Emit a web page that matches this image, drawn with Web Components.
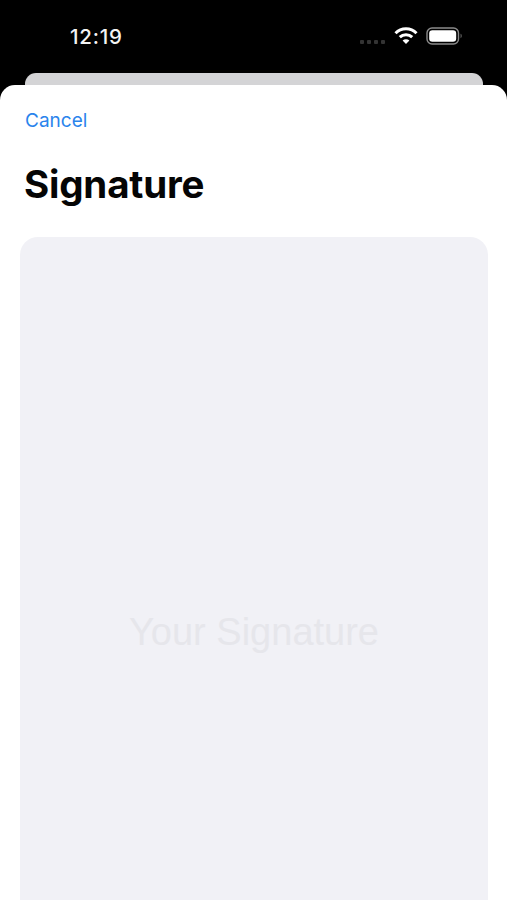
<!DOCTYPE html>
<html>
<head>
<meta charset="utf-8">
<style>
	html, body { margin: 0; height: 900px; overflow: hidden; background: #000; font-family: Inter, "Liberation Sans", sans-serif; }
</style>
</head>
<body>
<status-bar></status-bar>
<sheet-view>
	<signature-pad></signature-pad>
</sheet-view>
<script>
class StatusBar extends HTMLElement {
	constructor() {
		super();
		this.attachShadow({ mode: "open" });
		this.shadowRoot.innerHTML = `
			<style>
				:host { display: flex; align-items: center; justify-content: space-between; height: 73px; box-sizing: border-box; padding: 0 44px 0 70px; color: #f4f4f4; }
				.time { font-size: 20.5px; font-weight: 500; letter-spacing: 0.8px; }
				.icons { display: flex; align-items: center; margin-top: 1px; }
				.dots { display: flex; gap: 2.4px; margin-right: 9px; margin-top: 10px; }
				.dots i { width: 4.5px; height: 4px; background: #333; border-radius: 1px; }
				svg { display: block; }
			</style>
			<span class="time">12:19</span>
			<div class="icons">
				<div class="dots"><i></i><i></i><i></i><i></i></div>
				<svg width="24" height="19" viewBox="0 0 24 19" style="margin-right:8px;margin-top:-3px">
					<path d="M1.5 7.2C7.2 1.4 16.8 1.4 22.5 7.2" fill="none" stroke="#fff" stroke-width="3"/>
					<path d="M5.8 11.2C9.2 7.9 14.8 7.9 18.2 11.2" fill="none" stroke="#fff" stroke-width="3"/>
					<path d="M12 18L8.6 14.4C10.5 12.7 13.5 12.7 15.4 14.4Z" fill="#fff"/>
				</svg>
				<svg width="37" height="18" viewBox="0 0 37 18" style="margin-top:-3px">
					<rect x="1" y="1" width="31.5" height="16" rx="5" fill="none" stroke="#8b8b8b" stroke-width="1.4"/>
					<rect x="3.2" y="3.2" width="27" height="11.6" rx="3.2" fill="#fff"/>
					<path d="M34.6 6.8C36 7.2 36 10.8 34.6 11.2Z" fill="#777"/>
				</svg>
			</div>
		`;
	}
}

class SheetView extends HTMLElement {
	constructor() {
		super();
		this.attachShadow({ mode: "open" });
		this.shadowRoot.innerHTML = `
			<style>
				:host { display: block; }
				.behind { height: 12px; margin: 0 24px 0 25px; background: #d4d4d6; border-radius: 11px 11px 0 0; }
				.sheet { height: 815px; box-sizing: border-box; background: #fff; border-radius: 15px 15px 0 0; padding: 23px 19px 0 20px; overflow: hidden; }
				a { display: block; margin-left: 5px; height: 25px; line-height: 25px; font-size: 19px; color: #2a84ec; }
				h1 { margin: 27px 0 0 4px; height: 48px; line-height: 48px; font-size: 38.5px; font-weight: 700; letter-spacing: -0.2px; color: #050505; }
				.body { margin-top: 29px; }
			</style>
			<div class="behind"></div>
			<div class="sheet">
				<a>Cancel</a>
				<h1>Signature</h1>
				<div class="body"><slot></slot></div>
			</div>
		`;
	}
}

class SignaturePad extends HTMLElement {
	constructor() {
		super();
		this.attachShadow({ mode: "open" });
		this.shadowRoot.innerHTML = `
			<style>
				:host { display: flex; justify-content: center; height: 700px; padding-top: 368px; box-sizing: border-box; background: #f1f1f6; border-radius: 18px 18px 0 0; }
				span { height: 54px; line-height: 54px; font-size: 38px; font-family: "Liberation Sans", sans-serif; color: #e6e6eb; }
			</style>
			<span>Your Signature</span>
		`;
	}
}

customElements.define("status-bar", StatusBar);
customElements.define("sheet-view", SheetView);
customElements.define("signature-pad", SignaturePad);
</script>
</body>
</html>
